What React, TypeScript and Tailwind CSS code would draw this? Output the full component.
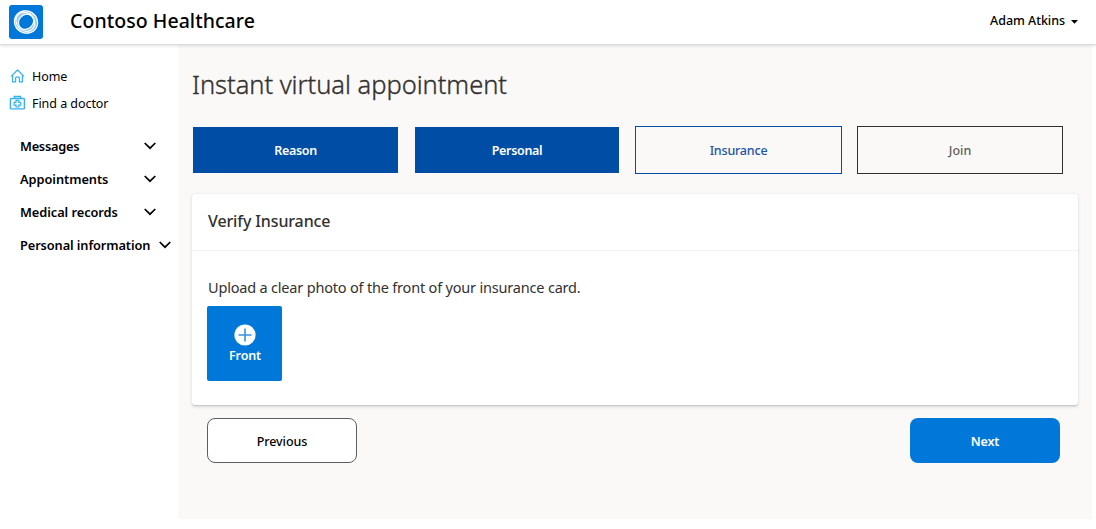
import React from "react";

const steps = [
  { label: "Reason", width: "w-[205px]", look: "h-[46px] bg-[#004da6] text-white font-semibold tracking-[-0.3px]", gap: "mr-[17px]" },
  { label: "Personal", width: "w-[204px]", look: "h-[46px] bg-[#004da6] text-white font-semibold tracking-[-0.3px]", gap: "mr-4" },
  { label: "Insurance", width: "w-[207px]", look: "h-12 border border-[#004da6] text-[#1b55a5] font-medium tracking-[-0.2px]", gap: "mr-[15px]" },
  { label: "Join", width: "w-[206px]", look: "h-12 border border-[#323130] text-[#605e5c] font-medium", gap: "" },
];

const menu = [
  { label: "Messages", width: "w-[136px]", tracking: "tracking-[-0.25px]" },
  { label: "Appointments", width: "w-[136px]", tracking: "tracking-[-0.05px]" },
  { label: "Medical records", width: "w-[136px]", tracking: "tracking-[-0.05px]" },
  { label: "Personal information", width: "w-[151px]", tracking: "tracking-[-0.1px]" },
];

function Logo() {
  return (
    <svg width="34" height="34" viewBox="0 0 34 34" fill="none">
      <rect width="34" height="34" rx="3" fill="#0078d9" />
      <circle cx="17" cy="17" r="9.6" stroke="#9accf3" strokeWidth="4.4" />
      <ellipse cx="17" cy="17" rx="11.8" ry="11" transform="rotate(30 17 17)" stroke="#fff" strokeWidth="1.1" />
      <ellipse cx="16.4" cy="17.4" rx="10.2" ry="8.8" transform="rotate(50 17 17)" stroke="#fff" strokeWidth="1" />
      <ellipse cx="17.2" cy="16.9" rx="8.2" ry="7" transform="rotate(-45 17 17)" stroke="#fff" strokeWidth="1.2" />
    </svg>
  );
}

function HomeIcon() {
  return (
    <svg className="mt-[-3px]" width="16" height="16" viewBox="0 0 16 16" fill="none" stroke="#35b2f3" strokeWidth="1.2" strokeLinejoin="round" strokeLinecap="round">
      <path d="M2.3 8.2 8.5 2l6.2 6.2M3.6 7v6.9h3V9.6q1.9-1.6 3.8 0v4.3h3V7" />
    </svg>
  );
}

function DoctorIcon() {
  return (
    <svg className="mt-[-4px]" width="16" height="16" viewBox="0 0 16 16" fill="none" stroke="#35b2f3">
      <rect x="1.4" y="3.5" width="14" height="10.4" rx="0.8" strokeWidth="1.4" />
      <path d="M5.3 3.2V1.5h6.2v1.7" strokeWidth="1.3" />
      <path d="M7 5.4v1.9H5.1v2.8H7V12h2.8v-1.9h1.9V7.3H9.8V5.4z" strokeWidth="1.2" />
    </svg>
  );
}

function Chevron() {
  return (
    <svg className="mt-[-2px]" width="12" height="8" viewBox="0 0 12 8" fill="none" stroke="#000" strokeWidth="1.7">
      <path d="M0.7 1 6 6.2 11.3 1" />
    </svg>
  );
}

export default function App() {
  return (
    <div className="flex h-[529px] w-[1096px] flex-col overflow-hidden bg-white font-['Noto_Sans','Open_Sans',sans-serif] whitespace-nowrap text-black">
      <header className="relative flex h-[45px] shrink-0 items-center border-b border-[#dcdcdc] bg-white pr-[18px] pl-[9px] shadow-[0_1px_3px_rgba(0,0,0,0.12)]">
        <Logo />
        <h1 className="mt-[-3px] ml-[27px] text-[19.5px] font-medium tracking-[0.05px]">Contoso Healthcare</h1>
        <div className="mt-[-2px] ml-auto flex items-center text-[12.5px] font-medium tracking-[-0.05px]">
          Adam Atkins
          <svg className="mt-[2px] ml-[6px]" width="7" height="4" viewBox="0 0 7 4">
            <path d="M0 0h7L3.5 3.7z" />
          </svg>
        </div>
      </header>
      <div className="flex flex-1">
        <aside className="w-[178px] shrink-0 pt-[19px]">
          <nav className="pl-[9px] text-[12.5px] tracking-[-0.05px]">
            <a className="flex h-[27px] items-center gap-[7px]"><HomeIcon />Home</a>
            <a className="flex h-[27px] items-center gap-[7px]"><DoctorIcon />Find a doctor</a>
          </nav>
          <ul className="mt-[12px] pl-5 text-[12.8px] font-semibold">
            {menu.map((item) => (
              <li key={item.label} className={`flex h-[33px] items-center justify-between ${item.width} ${item.tracking}`}>
                {item.label}
                <Chevron />
              </li>
            ))}
          </ul>
        </aside>
        <main className="h-[474px] w-[914px] bg-[#faf9f8] pt-5 pl-[14px]">
          <h2 className="h-[38px] text-[25.5px] leading-[38px] font-light tracking-[-0.03px] text-[#323130] [-webkit-text-stroke:0.35px_#323130]">Instant virtual appointment</h2>
          <div className="mt-[23px] ml-px flex h-12 items-center text-[12.5px]">
            {steps.map((step) => (
              <div key={step.label} className={`flex shrink-0 items-center justify-center pt-[2px] ${step.width} ${step.look} ${step.gap}`}>
                {step.label}
              </div>
            ))}
          </div>
          <section className="mt-5 h-[211px] w-[886px] rounded-[3px] bg-white shadow-[0_1.6px_3.6px_rgba(0,0,0,0.13),0_0.3px_0.9px_rgba(0,0,0,0.11)]">
            <h3 className="h-[57px] border-b border-[#f3f2f1] pl-4 text-[16px] leading-[54px] font-medium tracking-[-0.12px] text-[#323130]">Verify Insurance</h3>
            <p className="mt-[25px] ml-4 h-[22px] text-[14.5px] leading-[22px] tracking-[-0.19px] text-[#323130]">
              Upload a clear photo of the front of your insurance card.
            </p>
            <button className="mt-[8px] ml-[15px] flex h-[75px] w-[75px] flex-col items-center rounded-[2px] bg-[#0078d9] pt-[18px] text-[12.5px] leading-[20px] font-semibold tracking-[-0.15px] text-white">
              <svg width="22" height="22" viewBox="0 0 22 22" className="ml-px shrink-0">
                <circle cx="11" cy="11" r="10.6" fill="#fff" />
                <path d="M11 4.5v13M4.5 11h13" stroke="#3a93dc" strokeWidth="1.6" />
              </svg>
              <span className="ml-px">Front</span>
            </button>
          </section>
          <div className="mt-[13px] flex w-[868px] justify-between pl-[15px] text-[12.5px]">
            <button className="h-[45px] w-[150px] rounded-[8px] border border-[#605e5c] bg-white pt-[3px] font-medium tracking-[-0.05px]">Previous</button>
            <button className="h-[45px] w-[150px] rounded-[8px] bg-[#0078d9] pt-[3px] font-semibold tracking-[-0.1px] text-white">Next</button>
          </div>
        </main>
      </div>
    </div>
  );
}
